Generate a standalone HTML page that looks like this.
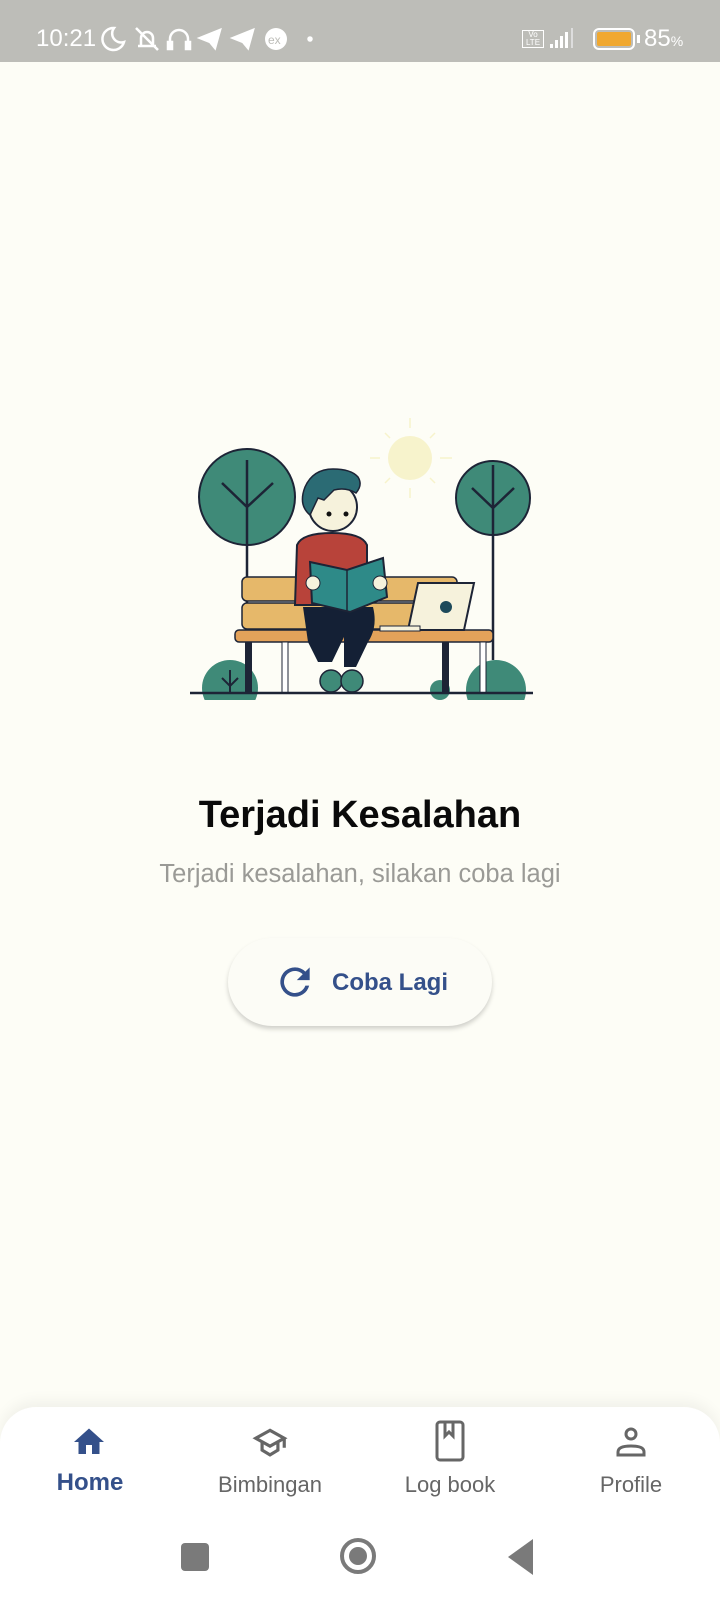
<!DOCTYPE html>
<html><head><meta charset="utf-8"><style>
*{margin:0;padding:0;box-sizing:border-box}
body{width:720px;height:1600px;background:#fdfdf6;font-family:"Liberation Sans",sans-serif;position:relative;overflow:hidden}
.status{position:absolute;left:0;top:0;width:720px;height:62px;background:#bdbdb8;color:#fff}
.abs{position:absolute}
.title{position:absolute;left:0;width:720px;top:794px;text-align:center;font-size:38px;font-weight:bold;color:#0a0a0a}
.sub{position:absolute;left:0;width:720px;top:860px;text-align:center;font-size:25.5px;color:#9a9a96}
.btn{position:absolute;left:228px;top:938px;width:264px;height:88px;border-radius:44px;background:#fcfcf6;box-shadow:0 3px 5px rgba(0,0,0,0.18);}
.btn span{position:absolute;left:104px;top:31px;font-size:24px;font-weight:bold;color:#34508a}
.nav{position:absolute;left:0;top:1407px;width:720px;height:193px;background:#fff;border-radius:36px 36px 0 0;box-shadow:0 -6px 14px rgba(0,0,0,0.05)}
.lab{position:absolute;top:1472px;font-size:22px;color:#666;text-align:center;width:160px}
</style></head><body>
<div class="status">
 <div class="abs" style="left:36px;top:25px;font-size:24px">10:21</div>
 <svg class="abs" style="left:100px;top:24px" width="220" height="30" viewBox="0 0 220 30" fill="none" stroke="#fff" stroke-width="2.5">
  <path d="M14 4a11 11 0 1 0 10 14a9 9 0 0 1-10-14z"/>
  <path d="M38 22h18M41 22v-8a6 6 0 0 1 12 0v8M36 4l22 22"/>
  <path d="M70 24v-9a9 9 0 0 1 18 0v9M68 18h4v7h-4zM86 18h4v7h-4z"/>
  <path d="M100 14l20-8-5 18-5-6z" fill="#fff"/>
  <path d="M133 14l20-8-5 18-5-6z" fill="#fff"/>
  <circle cx="176" cy="15" r="11" fill="#fff" stroke="none"/>
  <text x="168" y="20" font-size="12" fill="#bdbdb8" stroke="none" font-family="Liberation Sans">ex</text>
  <circle cx="210" cy="15" r="1.5" fill="#fff"/>
 </svg>
 <div class="abs" style="left:522px;top:30px;width:22px;height:18px;border:1px solid #fff;font-size:8px;line-height:8px;text-align:center">Vo<br>LTE</div>
 <svg class="abs" style="left:550px;top:28px" width="30" height="22"><rect x="0" y="16" width="3" height="4" fill="#fff"/><rect x="5" y="12" width="3" height="8" fill="#fff"/><rect x="10" y="8" width="3" height="12" fill="#fff"/><rect x="15" y="4" width="3" height="16" fill="#fff"/><rect x="21" y="0" width="2" height="20" fill="#ddd"/></svg>
 <div class="abs" style="left:593px;top:28px;width:42px;height:22px;border:2.5px solid #fff;border-radius:6px;padding:2px"><div style="width:100%;height:100%;background:#f0a830;border-radius:2px"></div></div>
 <div class="abs" style="left:637px;top:35px;width:3px;height:8px;background:#fff"></div>
 <div class="abs" style="left:644px;top:25px;font-size:24px">85<span style="font-size:14px">%</span></div>
</div>

<svg class="abs" style="left:180px;top:400px" width="360" height="300" viewBox="180 400 360 300">
 <g stroke="#f7f3cc" stroke-width="1.5"><line x1="410" y1="418" x2="410" y2="428"/><line x1="410" y1="488" x2="410" y2="498"/><line x1="370" y1="458" x2="380" y2="458"/><line x1="440" y1="458" x2="452" y2="458"/><line x1="385" y1="433" x2="390" y2="438"/><line x1="430" y1="478" x2="435" y2="483"/><line x1="435" y1="433" x2="430" y2="438"/><line x1="385" y1="483" x2="390" y2="478"/></g>
 <circle cx="410" cy="458" r="22" fill="#f7f3cc"/>
 <circle cx="247" cy="497" r="48" fill="#3f8a78" stroke="#1d2436" stroke-width="2"/>
 <path d="M247 460V693M222 483l25 24 26-24" stroke="#1d2436" stroke-width="2.5" fill="none"/>
 <circle cx="493" cy="498" r="37" fill="#3f8a78" stroke="#1d2436" stroke-width="2"/>
 <path d="M493 465V660M472 488l21 20 21-20" stroke="#1d2436" stroke-width="2.5" fill="none"/>
 <circle cx="230" cy="688" r="28" fill="#3f8a78"/>
 <path d="M222 678l8 8 8-8M230 670v22" stroke="#1d2436" stroke-width="2" fill="none"/>
 <circle cx="496" cy="690" r="30" fill="#3f8a78"/>
 <circle cx="440" cy="690" r="10" fill="#3f8a78"/>
 <rect x="242" y="577" width="215" height="24" rx="5" fill="#e6b86a" stroke="#1d2436" stroke-width="1.5"/>
 <rect x="242" y="603" width="215" height="26" rx="5" fill="#e6b86a" stroke="#1d2436" stroke-width="1.5"/>
 <rect x="235" y="630" width="258" height="12" rx="4" fill="#e3a25a" stroke="#1d2436" stroke-width="1.5"/>
 <g fill="#1d2436"><rect x="245" y="642" width="7" height="51"/><rect x="282" y="642" width="6" height="51" fill="#fff" stroke="#1d2436"/><rect x="442" y="642" width="7" height="51"/><rect x="480" y="642" width="6" height="51" fill="#fff" stroke="#1d2436"/></g>
 <path d="M418 583h56l-10 47h-56z" fill="#f6f2dc" stroke="#1d2436" stroke-width="2"/>
 <rect x="380" y="626" width="40" height="5" fill="#f6f2dc" stroke="#1d2436"/>
 <circle cx="446" cy="607" r="6" fill="#1d4a5a"/>
 <path d="M297 545q5-12 35-12q30 0 35 12l0 60h-72z" fill="#b8433a" stroke="#1d2436" stroke-width="2"/>
 <path d="M303 607h70q5 20-5 35l-12 25h-12l0-30l-12 25h-14l-10-20z" fill="#142035"/>
 <circle cx="331" cy="681" r="11" fill="#3f8a78" stroke="#1d2436" stroke-width="1.5"/>
 <circle cx="352" cy="681" r="11" fill="#3f8a78" stroke="#1d2436" stroke-width="1.5"/>
 <circle cx="333" cy="507" r="24" fill="#f6f2dc" stroke="#1d2436" stroke-width="2"/>
 <path d="M310 515q-12-10-5-28q8-18 28-18q18 0 25 8q5 8-2 16q-10-6-22-3l-10 10l-6-2z" fill="#2b6b74" stroke="#1d2436" stroke-width="1.5"/>
 <circle cx="329" cy="514" r="2.5" fill="#111"/><circle cx="346" cy="514" r="2.5" fill="#111"/>
 <path d="M310 562l37 8 36-12 4 39-37 15-38-9z" fill="#2e8a88" stroke="#1d2436" stroke-width="2"/>
 <path d="M347 570v42" stroke="#1d2436" stroke-width="1.5"/>
 <circle cx="313" cy="583" r="7" fill="#f6f2dc" stroke="#1d2436"/><circle cx="380" cy="583" r="7" fill="#f6f2dc" stroke="#1d2436"/>
 <line x1="190" y1="693" x2="533" y2="693" stroke="#1d2436" stroke-width="2.5"/>
</svg>

<div class="title">Terjadi Kesalahan</div>
<div class="sub">Terjadi kesalahan, silakan coba lagi</div>
<div class="btn">
 <svg class="abs" style="left:45px;top:22px" width="44" height="44" viewBox="0 0 24 24"><path d="M17.65 6.35A7.96 7.96 0 0 0 12 4a8 8 0 1 0 7.73 10h-2.08A6 6 0 1 1 12 6c1.66 0 3.14.69 4.22 1.78L13 11h7V4z" fill="#34508a"/></svg>
 <span>Coba Lagi</span>
</div>

<div class="nav"></div>
<svg class="abs" style="left:70px;top:1424px" width="38" height="36" viewBox="0 0 24 24"><path d="M10 20v-6h4v6h5v-8h3L12 3 2 12h3v8z" fill="#34508a"/></svg>
<div class="lab" style="left:10px;top:1469px;color:#34508a;font-weight:bold;font-size:24px">Home</div>
<svg class="abs" style="left:250px;top:1424px" width="40" height="38" viewBox="0 0 24 24" fill="none" stroke="#666" stroke-width="2"><path d="M12 4 3 9l9 5 9-5z M7 11.5v5l5 3 5-3v-5 M21 9v6"/></svg>
<div class="lab" style="left:190px">Bimbingan</div>
<svg class="abs" style="left:435px;top:1420px" width="30" height="42" viewBox="0 0 30 42" fill="none" stroke="#666" stroke-width="3"><rect x="2" y="2" width="26" height="38" rx="3"/><path d="M10 2v14l4-4 4 4V2"/></svg>
<div class="lab" style="left:370px">Log book</div>
<svg class="abs" style="left:613px;top:1424px" width="36" height="36" viewBox="0 0 36 36" fill="none" stroke="#666" stroke-width="3"><circle cx="18" cy="10" r="5"/><path d="M5 31v-3q0-6 13-6t13 6v3z"/></svg>
<div class="lab" style="left:551px">Profile</div>

<div class="abs" style="left:181px;top:1543px;width:28px;height:28px;background:#7a7a7a;border-radius:4px"></div>
<div class="abs" style="left:340px;top:1538px;width:36px;height:36px;border:4px solid #7a7a7a;border-radius:50%"><div style="margin:5px;width:18px;height:18px;background:#7a7a7a;border-radius:50%"></div></div>
<svg class="abs" style="left:505px;top:1537px" width="30" height="40"><path d="M28 2v36L3 20z" fill="#7a7a7a"/></svg>
</body></html>
